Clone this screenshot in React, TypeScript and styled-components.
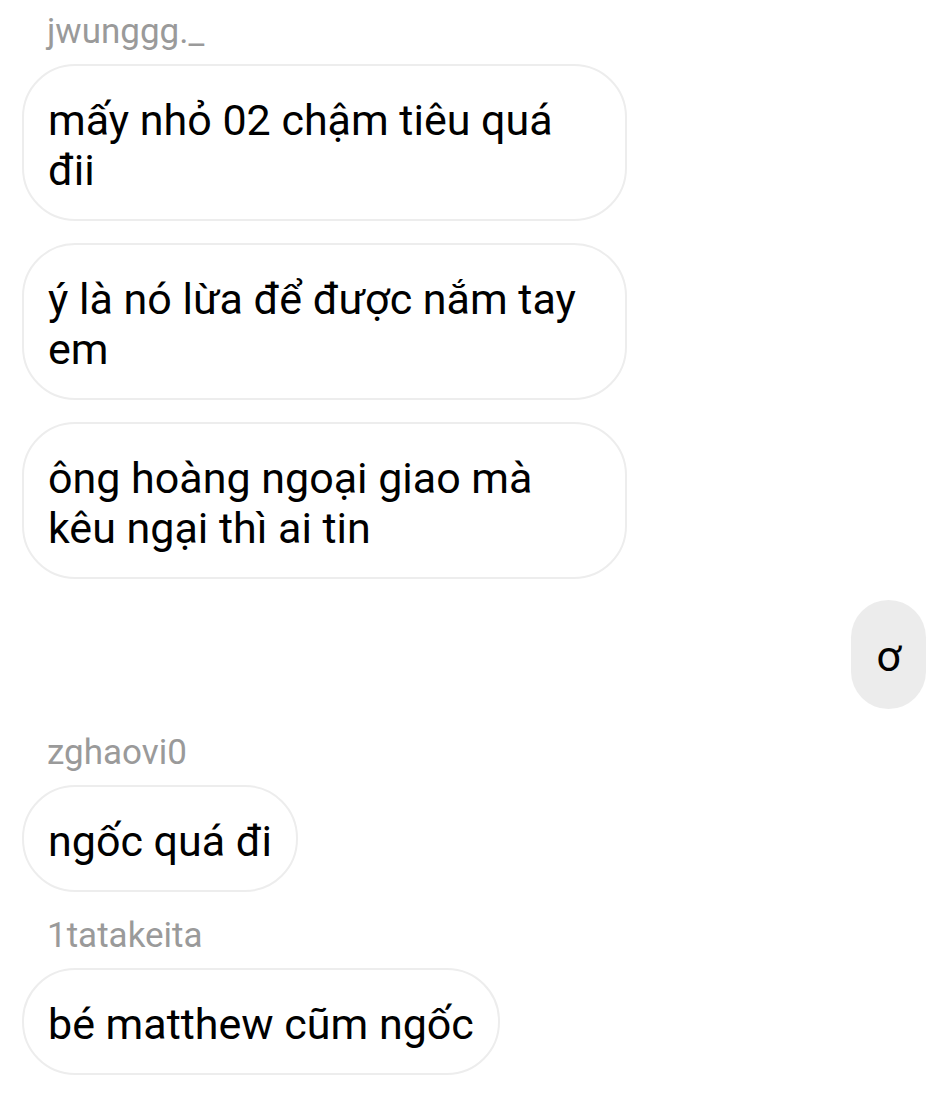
import styled, {createGlobalStyle} from "styled-components";

const GlobalStyle = createGlobalStyle`
  html, body {
    margin: 0;
    padding: 0;
    background: #fff;
  }

  body {
    font-family: Roboto, "Noto Sans", "Liberation Sans", sans-serif;
    -webkit-font-smoothing: antialiased;
  }
`;

const Thread = styled.div`
  display: flex;
  flex-direction: column;
  padding: 11px 26px 0 22px;
  width: 952px;
  box-sizing: border-box;
`;

const Group = styled.div<{ $mine?: boolean }>`
  display: flex;
  flex-direction: column;
  align-items: ${p => (p.$mine ? "flex-end" : "flex-start")};
  gap: 22px;
  margin-top: ${p => (p.$mine ? "21px" : "23px")};

  &:first-child {
    margin-top: 0;
  }
`;

const Sender = styled.div`
  font-size: 35px;
  line-height: 41px;
  color: #9a9a9a;
  padding-left: 25px;
  margin-bottom: -10px;
`;

const Bubble = styled.div<{ $mine?: boolean }>`
  box-sizing: border-box;
  max-width: 605px;
  font-size: 43px;
  line-height: 50px;
  color: #000;
  border-radius: 53px;
  padding: ${p => (p.$mine ? "31px 25px 28px" : "29px 24px 24px")};
  border: ${p => (p.$mine ? "none" : "2px solid #ededed")};
  background: ${p => (p.$mine ? "#ececec" : "#fff")};
`;

type Msg = { from: string; texts: string[] };

const thread: Msg[] = [
    {from: "jwunggg._", texts: ["mấy nhỏ 02 chậm tiêu quá đii", "ý là nó lừa để được nắm tay em", "ông hoàng ngoại giao mà kêu ngại thì ai tin"]},
    {from: "", texts: ["ơ"]},
    {from: "zghaovi0", texts: ["ngốc quá đi"]},
    {from: "1tatakeita", texts: ["bé matthew cũm ngốc"]},
];

export default function App() {
    return (
        <>
            <GlobalStyle/>
            <Thread>
                {thread.map((msg, i) => {
                    const mine = msg.from === "";
                    return (
                        <Group key={i} $mine={mine}>
                            {!mine && <Sender>{msg.from}</Sender>}
                            {msg.texts.map((t, j) => (
                                <Bubble key={j} $mine={mine}>{t}</Bubble>
                            ))}
                        </Group>
                    );
                })}
            </Thread>
        </>
    );
}
